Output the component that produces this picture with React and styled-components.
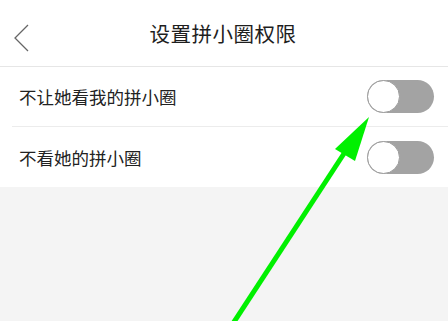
import React from 'react';
import styled, { createGlobalStyle } from 'styled-components';

const GlobalStyle = createGlobalStyle`
  html, body {
    margin: 0;
    padding: 0;
    background: #f4f4f4;
    font-family: "Noto Sans CJK SC", "Noto Sans", sans-serif;
  }
`;

const Page = styled.div`
  position: relative;
  width: 448px;
  height: 321px;
  overflow: hidden;
  background: #f4f4f4;
`;

const Header = styled.header`
  position: relative;
  display: flex;
  align-items: center;
  justify-content: center;
  height: 66px;
  background: #fff;
  border-bottom: 1px solid #e6e6e6;
`;

const BackButton = styled.button`
  position: absolute;
  left: 12px;
  top: 22px;
  display: flex;
  padding: 0;
  border: 0;
  background: none;
`;

const Title = styled.h1`
  margin: 0 0 0 -2px;
  font-size: 20.5px;
  font-weight: 400;
  color: #1e1e1e;
  letter-spacing: 0.5px;
`;

const List = styled.ul`
  margin: 0;
  padding: 0;
  list-style: none;
  background: #fff;
`;

const Row = styled.li`
  display: flex;
  align-items: center;
  justify-content: space-between;
  height: ${p => p.h}px;
  margin-left: 12px;
  padding: 0 14px 0 7px;
  border-bottom: ${p => (p.last ? 'none' : '1px solid #ececec')};
`;

const Label = styled.span`
  font-size: 17.5px;
  color: #222;
`;

const Track = styled.div`
  position: relative;
  width: 67px;
  height: 33px;
  border-radius: 17px;
  background: #a3a3a3;
  box-sizing: border-box;
`;

const Knob = styled.div`
  position: absolute;
  left: 0;
  top: 0;
  width: 33px;
  height: 33px;
  border-radius: 50%;
  background: #fff;
  border: 1.5px solid #9c9c9c;
  box-sizing: border-box;
`;

const Overlay = styled.svg`
  position: absolute;
  left: 0;
  top: 0;
  pointer-events: none;
`;

const Toggle = () => (
  <Track>
    <Knob />
  </Track>
);

const App = () => {
  const items = ['不让她看我的拼小圈', '不看她的拼小圈'];

  return (
    <Page>
      <GlobalStyle />
      <Header>
        <BackButton aria-label="back">
          <svg width="20" height="32" viewBox="0 0 20 32">
            <path d="M16 3 L3 16 L16 29" fill="none" stroke="#666" strokeWidth="1.3" />
          </svg>
        </BackButton>
        <Title>设置拼小圈权限</Title>
      </Header>
      <List>
        {items.map((item, i) => (
          <Row key={i} h={i === 0 ? 59 : 60} last={i === items.length - 1}>
            <Label>{item}</Label>
            <Toggle />
          </Row>
        ))}
      </List>
      <Overlay width="448" height="321" viewBox="0 0 448 321">
        <line x1="345" y1="152" x2="232" y2="325" stroke="#00f000" strokeWidth="5" />
        <polygon points="369,117 335,149 355,161" fill="#00f000" />
      </Overlay>
    </Page>
  );
};

export default App;
